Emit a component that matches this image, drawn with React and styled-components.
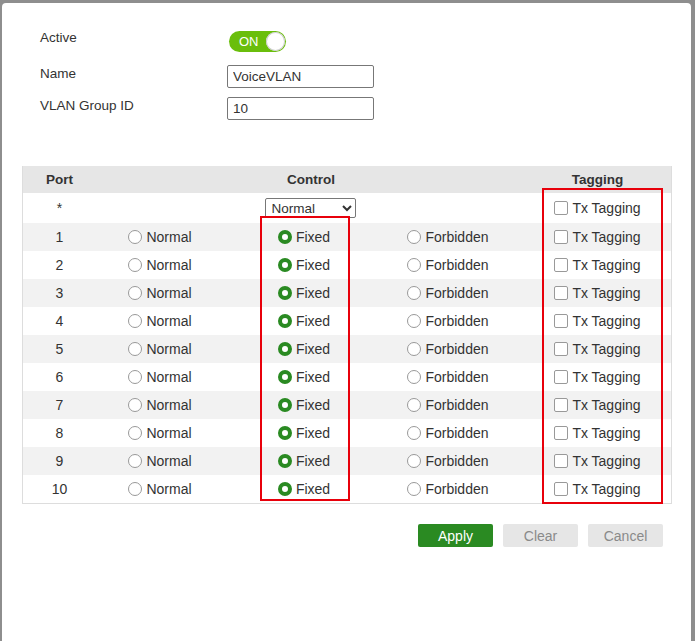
import React from 'react';
import styled, { createGlobalStyle } from 'styled-components';

const GlobalStyle = createGlobalStyle`
    html, body {
        margin: 0;
        padding: 0;
        background: #8e8e8e;
        font-family: "Liberation Sans", Arial, sans-serif;
    }
`;

const Dialog = styled.div`
    box-sizing: border-box;
    margin: 3px 4px 0 2px;
    height: 638px;
    background: #fff;
    border-radius: 4px 4px 0 0;
    padding: 26px 19px 0 20px;
    color: #333;
    font-size: 13.5px;
`;

const Form = styled.div`
    display: flex;
    flex-direction: column;
    padding-left: 18px;
`;

const FormRow = styled.div`
    display: grid;
    grid-template-columns: 187px 1fr;
    align-items: start;
    height: ${({ h }) => h}px;
`;

const Label = styled.label`
    line-height: 18px;
`;

const Toggle = styled.div`
    box-sizing: border-box;
    margin-left: 2px;
    margin-top: 2px;
    width: 57px;
    height: 21px;
    border-radius: 11px;
    background: #6abe0c;
    display: flex;
    align-items: center;
    justify-content: space-between;
    padding: 0 1px 0 10px;
    color: #fff;
    font-size: 13px;
`;

const Knob = styled.span`
    width: 19px;
    height: 19px;
    border-radius: 50%;
    background: #fff;
    box-shadow: inset 0 0 0 1px #ccc;
`;

const TextInput = styled.input`
    box-sizing: border-box;
    width: 147px;
    height: 23px;
    border: 1px solid #777;
    border-radius: 2px;
    padding: 0 5px;
    font-family: inherit;
    font-size: 13.5px;
    color: #333;
    outline: none;
`;

const TableWrap = styled.div`
    position: relative;
    margin-top: 37px;
    border: 1px solid #ddd;
    border-top: none;
    font-size: 14px;
`;

const Cols = `
    display: grid;
    grid-template-columns: 73px 128px 160px 128px 1fr;
    align-items: center;
`;

const HeadRow = styled.div`
    ${Cols}
    height: 27px;
    background: #e6e6e6;
    font-weight: bold;
    font-size: 13.5px;
    color: #333;
`;

const HeadCell = styled.div`
    text-align: center;
    grid-column: ${({ span }) => span || 'auto'};
    padding-left: ${({ pl }) => pl || 0}px;
`;

const Row = styled.div`
    ${Cols}
    height: ${({ h }) => h || 28}px;
    background: ${({ shade }) => (shade ? '#f2f2f2' : '#fff')};
`;

const Cell = styled.div`
    display: flex;
    justify-content: center;
    align-items: center;
    gap: 4px;
    grid-column: ${({ span }) => span || 'auto'};
    padding-left: ${({ pl }) => pl || 0}px;
`;

const Radio = styled.span`
    box-sizing: border-box;
    width: 14px;
    height: 14px;
    border-radius: 50%;
    background: #fff;
    border: ${({ checked }) => (checked ? '4px solid #2a8a22' : '1px solid #999')};
`;

const Check = styled.span`
    box-sizing: border-box;
    width: 14px;
    height: 14px;
    border-radius: 2px;
    background: #fff;
    border: 1px solid #999;
`;

const Select = styled.select`
    box-sizing: border-box;
    width: 91px;
    height: 20px;
    border: 1px solid #777;
    border-radius: 2px;
    font-family: inherit;
    font-size: 13.5px;
    color: #333;
    background: #fff;
    padding: 0 2px;
    margin-top: 0;
`;

const Mark = styled.div`
    position: absolute;
    border: 2px solid #e8000b;
    left: ${({ x }) => x}px;
    top: ${({ y }) => y}px;
    width: ${({ w }) => w}px;
    height: ${({ h }) => h}px;
    box-sizing: border-box;
    pointer-events: none;
`;

const Buttons = styled.div`
    display: flex;
    justify-content: flex-end;
    gap: 10px;
    margin-top: 20px;
    padding-right: 9px;
`;

const Button = styled.button`
    width: 75px;
    height: 23px;
    border: none;
    border-radius: 2px;
    font-family: inherit;
    font-size: 14px;
    background: ${({ primary }) => (primary ? '#2a8a22' : '#e6e6e6')};
    color: ${({ primary }) => (primary ? '#fff' : '#8a8a8a')};
`;

const ports = [1, 2, 3, 4, 5, 6, 7, 8, 9, 10];

export default function App() {
    return (
        <>
            <GlobalStyle />
            <Dialog>
                <Form>
                    <FormRow h={36}>
                        <Label>Active</Label>
                        <Toggle>
                            ON
                            <Knob />
                        </Toggle>
                    </FormRow>
                    <FormRow h={32}>
                        <Label>Name</Label>
                        <TextInput defaultValue="VoiceVLAN" />
                    </FormRow>
                    <FormRow h={32}>
                        <Label>VLAN Group ID</Label>
                        <TextInput defaultValue="10" />
                    </FormRow>
                </Form>

                <TableWrap>
                    <HeadRow>
                        <HeadCell>Port</HeadCell>
                        <HeadCell span="span 3" pl={14}>Control</HeadCell>
                        <HeadCell pl={12}>Tagging</HeadCell>
                    </HeadRow>
                    <Row h={30}>
                        <Cell>*</Cell>
                        <Cell span="span 3" pl={12}>
                            <Select defaultValue="Normal">
                                <option>Normal</option>
                                <option>Fixed</option>
                                <option>Forbidden</option>
                            </Select>
                        </Cell>
                        <Cell pl={12}>
                            <Check />
                            Tx Tagging
                        </Cell>
                    </Row>
                    {ports.map((p, i) => (
                        <Row key={p} shade={i % 2 === 0}>
                            <Cell>{p}</Cell>
                            <Cell>
                                <Radio />
                                Normal
                            </Cell>
                            <Cell>
                                <Radio checked />
                                Fixed
                            </Cell>
                            <Cell>
                                <Radio />
                                Forbidden
                            </Cell>
                            <Cell pl={12}>
                                <Check />
                                Tx Tagging
                            </Cell>
                        </Row>
                    ))}
                    <Mark x={237} y={50} w={90} h={285} />
                    <Mark x={519} y={22} w={121} h={316} />
                </TableWrap>

                <Buttons>
                    <Button primary>Apply</Button>
                    <Button>Clear</Button>
                    <Button>Cancel</Button>
                </Buttons>
            </Dialog>
        </>
    );
}
